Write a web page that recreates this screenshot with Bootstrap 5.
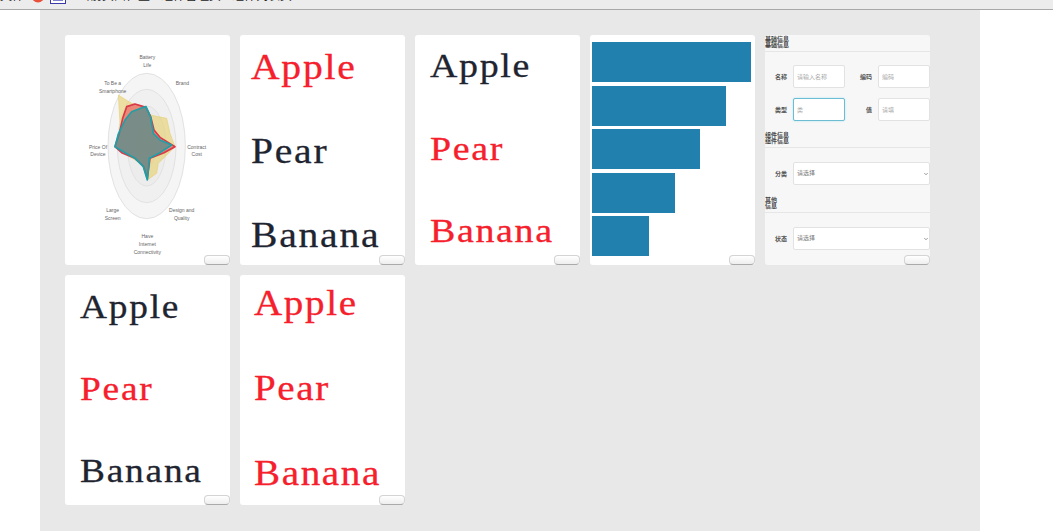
<!DOCTYPE html>
<html lang="zh-CN">
<head>
    <meta charset="UTF-8">
    <title>组件列表</title>
    <link href="https://cdn.jsdelivr.net/npm/bootstrap@5.3.0/dist/css/bootstrap.min.css" rel="stylesheet">
    <style>
        html, body { height: 531px; overflow: hidden; }
        body { background: #fff; font-family: "Liberation Sans", "Noto Sans CJK SC", sans-serif; }
        .topbar { height: 10px; background: #ececec; border-bottom: 1px solid #a8a8a8; overflow: hidden; font-size: 12px; line-height: 16px; color: #222; }
        .topbar-inner { margin-top: -12px; height: 16px; }
        .top-first { width: 31px; }
        .top-ball { width: 14px; margin-right: 5px; }
        .top-box { width: 16px; margin-right: 12px; }
        .top-item { margin-right: 11px; }
        .panel { margin-left: 40px; width: 940px; height: 521px; background: #e8e8e8; padding: 25px; gap: 10px; align-content: flex-start; }
        .tile { width: 165px; height: 230px; background: #fff; border-radius: 3px; position: relative; overflow: hidden; }
        .tile-btn { position: absolute; right: 0; bottom: 0; width: 26px; height: 10px; padding: 0; background: linear-gradient(#fff, #eee); border: 1px solid #d4d4d4; border-bottom-color: #aaa; border-radius: 4px; }
        .fruit { font-family: "Liberation Serif", serif; line-height: 1; }
        .fruit div { color: #1f2530; transform-origin: left center; transform: scaleX(1.1); -webkit-text-stroke: .3px currentColor; }
        .fruit .hot { color: #f5202c; }
        .fruit-a { padding: 14px 0 0 11px; font-size: 36px; letter-spacing: 1.6px; }
        .fruit-a div { height: 84px; }
        .fruit-b { padding: 15px 0 0 15px; font-size: 34px; letter-spacing: 1.6px; }
        .fruit-b div { height: 82px; }
        .fruit-c { padding: 13px 0 0 15px; font-size: 34.5px; letter-spacing: 1.5px; }
        .fruit-c div { height: 82.5px; }
        .fruit-d { padding: 11px 0 0 14px; font-size: 35.5px; letter-spacing: 1.5px; }
        .fruit-d div { height: 85px; }
        .bars { padding: 7px 0 0 2px; gap: 3.6px; }
        .bar { height: 40px; background: #2280af; }
        .form-tile { background: #f7f7f7; font-size: 6px; line-height: 6px; color: #555; }
        .form-head { width: 24px; padding-top: 1px; font-size: 6px; line-height: 6px; color: #444; font-weight: 700; }
        .head-short { width: 13px; margin-top: 11px; }
        .form-rule { border-top: 1px solid #e6e6e6; margin-top: 3px; padding-top: 13px; }
        .form-rule-sel { padding-top: 14px; }
        .form-row { margin-bottom: 10px; }
        .form-lab { width: 28px; padding-right: 6px; text-align: right; flex: none; font-size: 6px; font-weight: 700; }
        .form-lab2 { width: 33px; }
        .form-tile .form-control, .form-tile .form-select { height: 23px; min-height: 0; padding: 0 3px; border-radius: 2px; font-size: 6px; color: #777; border-color: #e2e2e2; box-shadow: none; }
        .form-tile .form-control { width: 52px; flex: none; }
        .form-tile .form-control::placeholder { color: #aaa; }
        .form-tile .focused { border-color: #6dbdd2; box-shadow: 0 0 2px #a8e0ec; }
        .form-tile .form-select { width: 137px; background-size: 4px 4px; background-position: right 1px center; }
        .radar-svg { display: block; }
        .radar-svg text { font-family: "Liberation Sans", sans-serif; font-size: 15px; fill: #666; text-anchor: middle; }
    </style>
</head>
<body>

    <div class="topbar">
        <div class="d-flex align-items-center topbar-inner">
            <span class="top-first">文件</span>
            <svg class="top-ball" height="14" viewBox="0 0 14 14"><circle cx="7" cy="7" r="6.5" fill="#e8503a"/></svg>
            <svg class="top-box" height="16" viewBox="0 0 16 16"><rect x=".5" y=".5" width="15" height="15" fill="#fff" stroke="#3a3aa8"/><rect x="3" y="8" width="10" height="5" fill="#7f7fd0"/></svg>
            <span class="top-item">当前页面位置</span>
            <span class="top-item">组件管理页</span>
            <span class="top-item">组件列表页</span>
        </div>
    </div>

    <div class="panel d-flex flex-wrap">
        <!-- radar chart -->
        <div class="tile">
            <svg class="radar-svg" width="165" height="230" viewBox="15 15 495 690">
                <g stroke="#e2e2e2" stroke-width="3">
                    <ellipse cx="260" cy="348" rx="116" ry="218" fill="#f5f5f5"/>
                    <ellipse cx="260" cy="348" rx="88" ry="170" fill="#f0f0f0"/>
                    <ellipse cx="260" cy="348" rx="58" ry="120" fill="#ececec"/>
                    <ellipse cx="260" cy="348" rx="29" ry="65" fill="#e6e6e6"/>
                </g>
                <polygon points="258,232 272,255 285,258 320,265 330,310 345,350 315,380 295,400 290,430 262,450 248,405 222,388 190,370 165,350 178,310 180,280 175,195 195,208 215,220" fill="#e8cf6a" fill-opacity=".6" stroke="#e6d27a" stroke-width="2" stroke-linejoin="round"/>
                <polygon points="258,232 272,260 282,300 300,322 345,350 312,368 270,385 262,445 250,408 225,385 185,368 165,350 178,310 188,265 200,230 225,222" fill="#e85a60" fill-opacity=".65" stroke="#d83848" stroke-width="5" stroke-linejoin="round"/>
                <polygon points="258,230 272,262 280,310 300,330 335,345 300,368 268,385 262,450 250,410 225,385 190,365 165,350 175,312 195,270 215,245 250,232" fill="#3f8f90" fill-opacity=".65" stroke="#1f9fa8" stroke-width="5" stroke-linejoin="round"/>
                <text x="262" y="88">Battery</text><text x="262" y="110">Life</text>
                <text x="367" y="165">Brand</text>
                <text x="158" y="165">To Be a</text><text x="158" y="190">Smartphone</text>
                <text x="410" y="356">Contract</text><text x="410" y="379">Cost</text>
                <text x="114" y="356">Price Of</text><text x="114" y="379">Device</text>
                <text x="365" y="546">Design and</text><text x="365" y="570">Quality</text>
                <text x="158" y="546">Large</text><text x="158" y="570">Screen</text>
                <text x="262" y="625">Have</text><text x="262" y="648">Internet</text><text x="262" y="672">Connectivity</text>
            </svg>
            <button class="btn tile-btn" type="button"></button>
        </div>

        <div class="tile fruit fruit-a">
            <div class="hot">Apple</div><div>Pear</div><div>Banana</div>
            <button class="btn tile-btn" type="button"></button>
        </div>

        <div class="tile fruit fruit-c">
            <div>Apple</div><div class="hot">Pear</div><div class="hot">Banana</div>
            <button class="btn tile-btn" type="button"></button>
        </div>

        <!-- bars -->
        <div class="tile">
            <div class="bars d-flex flex-column" id="barList"></div>
            <button class="btn tile-btn" type="button"></button>
        </div>

        <!-- tiny form -->
        <div class="tile form-tile">
            <div class="form-head">基础信息基础信息</div>
            <div class="form-rule">
                <div class="form-row d-flex align-items-center">
                    <span class="form-lab">名称</span><input class="form-control" placeholder="请输入名称">
                    <span class="form-lab form-lab2">编码</span><input class="form-control" placeholder="编码">
                </div>
                <div class="form-row d-flex align-items-center">
                    <span class="form-lab">类型</span><input class="form-control focused" placeholder="类">
                    <span class="form-lab form-lab2">值</span><input class="form-control" placeholder="请填">
                </div>
            </div>
            <div class="form-head">组件信息组件信息</div>
            <div class="form-rule form-rule-sel d-flex align-items-center">
                <span class="form-lab">分类</span>
                <select class="form-select"><option>请选择</option></select>
            </div>
            <div class="form-head head-short">其他信息</div>
            <div class="form-rule form-rule-sel d-flex align-items-center">
                <span class="form-lab">状态</span>
                <select class="form-select"><option>请选择</option></select>
            </div>
            <button class="btn tile-btn" type="button"></button>
        </div>

        <div class="tile fruit fruit-b">
            <div>Apple</div><div class="hot">Pear</div><div>Banana</div>
            <button class="btn tile-btn" type="button"></button>
        </div>

        <div class="tile fruit fruit-d">
            <div class="hot">Apple</div><div class="hot">Pear</div><div class="hot">Banana</div>
            <button class="btn tile-btn" type="button"></button>
        </div>
    </div>

    <script src="https://cdn.jsdelivr.net/npm/bootstrap@5.3.0/dist/js/bootstrap.bundle.min.js"></script>
    <script>
        const barWidths = [159, 134, 108, 83, 57];
        const barList = document.getElementById("barList");
        barWidths.forEach(w => {
            const bar = document.createElement("div");
            bar.className = "bar";
            bar.style.width = w + "px";
            barList.appendChild(bar);
        });
    </script>

</body>
</html>
